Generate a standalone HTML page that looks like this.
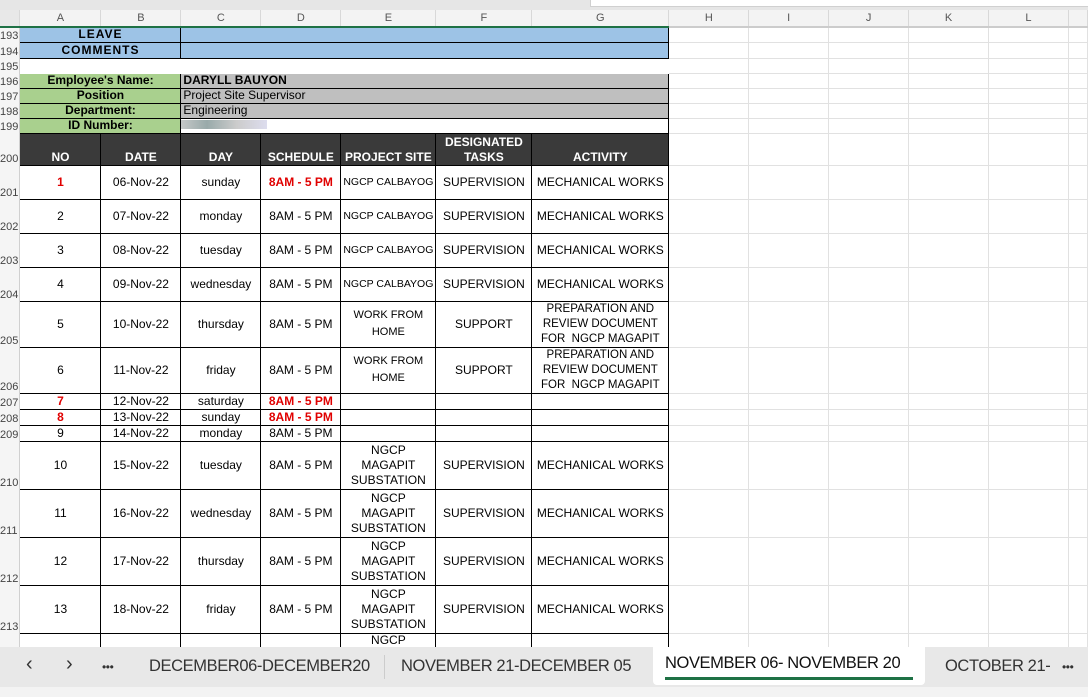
<!DOCTYPE html>
<html><head><meta charset="utf-8"><style>
body{margin:0;width:1088px;height:697px;overflow:hidden;background:#fff;font-family:"Liberation Sans",Arial,sans-serif;position:relative}
.top{position:absolute;left:0;top:0;width:1088px;height:10px;background:#e6e6e6}
.top2{position:absolute;left:590px;top:0;width:498px;height:6px;background:#fff;border-bottom:1px solid #d0d0d0;border-left:1px solid #d0d0d0}
table{position:absolute;left:0;top:10px;border-collapse:collapse;table-layout:fixed}
td{padding:0;font-size:12px;text-align:center;vertical-align:middle;border:1px solid #e1e1e1;overflow:hidden;white-space:nowrap;line-height:13px;color:#000}
td.rh{background:#f5f5f5;color:#444;font-size:11px;text-align:left;vertical-align:bottom;border:none;border-right:1px solid #d0d0d0;line-height:12px}
tr.ch td{background:#f3f3f3;color:#555;font-size:11px;border:none;border-right:1px solid #d8d8d8;border-bottom:2px solid #1e7145;height:16px;line-height:16px}
td.b{border:1px solid #000}
.bl{background:#9dc3e6}.gr{background:#a9d08e;font-weight:bold}.gy{background:#bfbfbf;text-align:left;padding-left:2px}
.hd td.b{background:#3a3a3a;color:#fff;font-weight:bold;vertical-align:bottom;line-height:15px}
.r{color:#e00000;font-weight:bold}
.w{white-space:normal;line-height:15px;font-size:11.5px}
.tabs{position:absolute;left:0;top:647px;width:1088px;height:40px;background:#e8e8e8;font-size:16.5px;color:#333;letter-spacing:-0.4px}
.tabs span{position:absolute;top:10px;white-space:nowrap}
.act{position:absolute;left:653px;top:0;width:272px;height:38px;background:#fff;border-radius:0 0 4px 4px}
.status{position:absolute;left:0;top:687px;width:1088px;height:10px;background:#f3f3f3}
</style></head><body>
<div class="top"></div><div class="top2"></div>
<table>
<colgroup><col style="width:20px"><col style="width:81px"><col style="width:80px"><col style="width:80px"><col style="width:80px"><col style="width:95px"><col style="width:96px"><col style="width:137px"><col style="width:80px"><col style="width:80px"><col style="width:80px"><col style="width:80px"><col style="width:80px"><col style="width:19px"></colgroup>
<tr class="ch"><td style="background:#e8e8e8"></td><td>A</td><td>B</td><td>C</td><td>D</td><td>E</td><td>F</td><td>G</td><td style="border-bottom-color:#ccc">H</td><td style="border-bottom-color:#ccc">I</td><td style="border-bottom-color:#ccc">J</td><td style="border-bottom-color:#ccc">K</td><td style="border-bottom-color:#ccc">L</td><td style="border-bottom-color:#ccc"></td></tr>
<tr style="height:15px"><td class="rh">193</td><td class="b bl" colspan="2" style="font-weight:bold;letter-spacing:1px">LEAVE</td><td class="b bl" colspan="5"></td><td></td><td></td><td></td><td></td><td></td><td></td></tr>
<tr style="height:16px"><td class="rh">194</td><td class="b bl" colspan="2" style="font-weight:bold;letter-spacing:1px">COMMENTS</td><td class="b bl" colspan="5"></td><td></td><td></td><td></td><td></td><td></td><td></td></tr>
<tr style="height:15px"><td class="rh">195</td><td colspan="7" style="border-color:#fff"></td><td></td><td></td><td></td><td></td><td></td><td></td></tr>
<tr style="height:15px"><td class="rh">196</td><td class="b gr" colspan="2">Employee's Name:</td><td class="b gy" colspan="5" style="font-weight:bold">DARYLL BAUYON</td><td></td><td></td><td></td><td></td><td></td><td></td></tr>
<tr style="height:15px"><td class="rh">197</td><td class="b gr" colspan="2">Position</td><td class="b gy" colspan="5">Project Site Supervisor</td><td></td><td></td><td></td><td></td><td></td><td></td></tr>
<tr style="height:15px"><td class="rh">198</td><td class="b gr" colspan="2">Department:</td><td class="b gy" colspan="5">Engineering</td><td></td><td></td><td></td><td></td><td></td><td></td></tr>
<tr style="height:15px"><td class="rh">199</td><td class="b gr" colspan="2">ID Number:</td><td class="b" colspan="5" style="text-align:left"><span style="display:inline-block;width:90px;height:9px;margin-left:-4px;background:linear-gradient(90deg,#ccc,#9aa,#ccc,#dde)"></span></td><td></td><td></td><td></td><td></td><td></td><td></td></tr>
<tr class="hd" style="height:32px"><td class="rh">200</td><td class="b">NO</td><td class="b">DATE</td><td class="b">DAY</td><td class="b">SCHEDULE</td><td class="b">PROJECT SITE</td><td class="b" style="white-space:normal">DESIGNATED TASKS</td><td class="b">ACTIVITY</td><td></td><td></td><td></td><td></td><td></td><td></td></tr>
<tr style="height:34px"><td class="rh">201</td><td class="b r">1</td><td class="b">06-Nov-22</td><td class="b">sunday</td><td class="b r">8AM - 5 PM</td><td class="b" style="font-size:10.5px">NGCP CALBAYOG</td><td class="b">SUPERVISION</td><td class="b">MECHANICAL WORKS</td><td></td><td></td><td></td><td></td><td></td><td></td></tr>
<tr style="height:34px"><td class="rh">202</td><td class="b">2</td><td class="b">07-Nov-22</td><td class="b">monday</td><td class="b">8AM - 5 PM</td><td class="b" style="font-size:10.5px">NGCP CALBAYOG</td><td class="b">SUPERVISION</td><td class="b">MECHANICAL WORKS</td><td></td><td></td><td></td><td></td><td></td><td></td></tr>
<tr style="height:34px"><td class="rh">203</td><td class="b">3</td><td class="b">08-Nov-22</td><td class="b">tuesday</td><td class="b">8AM - 5 PM</td><td class="b" style="font-size:10.5px">NGCP CALBAYOG</td><td class="b">SUPERVISION</td><td class="b">MECHANICAL WORKS</td><td></td><td></td><td></td><td></td><td></td><td></td></tr>
<tr style="height:34px"><td class="rh">204</td><td class="b">4</td><td class="b">09-Nov-22</td><td class="b">wednesday</td><td class="b">8AM - 5 PM</td><td class="b" style="font-size:10.5px">NGCP CALBAYOG</td><td class="b">SUPERVISION</td><td class="b">MECHANICAL WORKS</td><td></td><td></td><td></td><td></td><td></td><td></td></tr>
<tr style="height:46px"><td class="rh">205</td><td class="b">5</td><td class="b">10-Nov-22</td><td class="b">thursday</td><td class="b">8AM - 5 PM</td><td class="b w" style="font-size:11px;line-height:17px">WORK FROM<br>HOME</td><td class="b">SUPPORT</td><td class="b w">PREPARATION AND<br>REVIEW DOCUMENT<br>FOR&nbsp; NGCP MAGAPIT</td><td></td><td></td><td></td><td></td><td></td><td></td></tr>
<tr style="height:46px"><td class="rh">206</td><td class="b">6</td><td class="b">11-Nov-22</td><td class="b">friday</td><td class="b">8AM - 5 PM</td><td class="b w" style="font-size:11px;line-height:17px">WORK FROM<br>HOME</td><td class="b">SUPPORT</td><td class="b w">PREPARATION AND<br>REVIEW DOCUMENT<br>FOR&nbsp; NGCP MAGAPIT</td><td></td><td></td><td></td><td></td><td></td><td></td></tr>
<tr style="height:16px"><td class="rh">207</td><td class="b r">7</td><td class="b">12-Nov-22</td><td class="b">saturday</td><td class="b r">8AM - 5 PM</td><td class="b"></td><td class="b"></td><td class="b"></td><td></td><td></td><td></td><td></td><td></td><td></td></tr>
<tr style="height:16px"><td class="rh">208</td><td class="b r">8</td><td class="b">13-Nov-22</td><td class="b">sunday</td><td class="b r">8AM - 5 PM</td><td class="b"></td><td class="b"></td><td class="b"></td><td></td><td></td><td></td><td></td><td></td><td></td></tr>
<tr style="height:16px"><td class="rh">209</td><td class="b">9</td><td class="b">14-Nov-22</td><td class="b">monday</td><td class="b">8AM - 5 PM</td><td class="b"></td><td class="b"></td><td class="b"></td><td></td><td></td><td></td><td></td><td></td><td></td></tr>
<tr style="height:48px"><td class="rh">210</td><td class="b">10</td><td class="b">15-Nov-22</td><td class="b">tuesday</td><td class="b">8AM - 5 PM</td><td class="b w" style="font-size:12px">NGCP<br>MAGAPIT<br>SUBSTATION</td><td class="b">SUPERVISION</td><td class="b">MECHANICAL WORKS</td><td></td><td></td><td></td><td></td><td></td><td></td></tr>
<tr style="height:48px"><td class="rh">211</td><td class="b">11</td><td class="b">16-Nov-22</td><td class="b">wednesday</td><td class="b">8AM - 5 PM</td><td class="b w" style="font-size:12px">NGCP<br>MAGAPIT<br>SUBSTATION</td><td class="b">SUPERVISION</td><td class="b">MECHANICAL WORKS</td><td></td><td></td><td></td><td></td><td></td><td></td></tr>
<tr style="height:48px"><td class="rh">212</td><td class="b">12</td><td class="b">17-Nov-22</td><td class="b">thursday</td><td class="b">8AM - 5 PM</td><td class="b w" style="font-size:12px">NGCP<br>MAGAPIT<br>SUBSTATION</td><td class="b">SUPERVISION</td><td class="b">MECHANICAL WORKS</td><td></td><td></td><td></td><td></td><td></td><td></td></tr>
<tr style="height:48px"><td class="rh">213</td><td class="b">13</td><td class="b">18-Nov-22</td><td class="b">friday</td><td class="b">8AM - 5 PM</td><td class="b w" style="font-size:12px">NGCP<br>MAGAPIT<br>SUBSTATION</td><td class="b">SUPERVISION</td><td class="b">MECHANICAL WORKS</td><td></td><td></td><td></td><td></td><td></td><td></td></tr>
<tr style="height:48px"><td class="rh">214</td><td class="b"></td><td class="b"></td><td class="b"></td><td class="b"></td><td class="b" style="vertical-align:top">NGCP</td><td class="b"></td><td class="b"></td><td></td><td></td><td></td><td></td><td></td><td></td></tr>
</table>
<div class="tabs">
<div class="act"><div style="position:absolute;left:12px;right:12px;bottom:5px;height:3px;background:#1e7145"></div></div>
<span style="left:26px;font-size:20px;top:6px">&#x2039;</span><span style="left:66px;font-size:20px;top:6px">&#x203A;</span><span style="left:102px;font-size:12px;top:13px">&#8226;&#8226;&#8226;</span>
<span style="left:149px">DECEMBER06-DECEMBER20</span>
<div style="position:absolute;left:384px;top:8px;width:1px;height:24px;background:#ccc"></div>
<span style="left:401px">NOVEMBER 21-DECEMBER 05</span>
<span style="left:665px;top:7px;color:#111">NOVEMBER 06- NOVEMBER 20</span>
<span style="left:945px">OCTOBER 21-</span><span style="left:1062px;font-size:12px;top:13px">&#8226;&#8226;&#8226;</span>
</div>
<div class="status"></div>
</body></html>
